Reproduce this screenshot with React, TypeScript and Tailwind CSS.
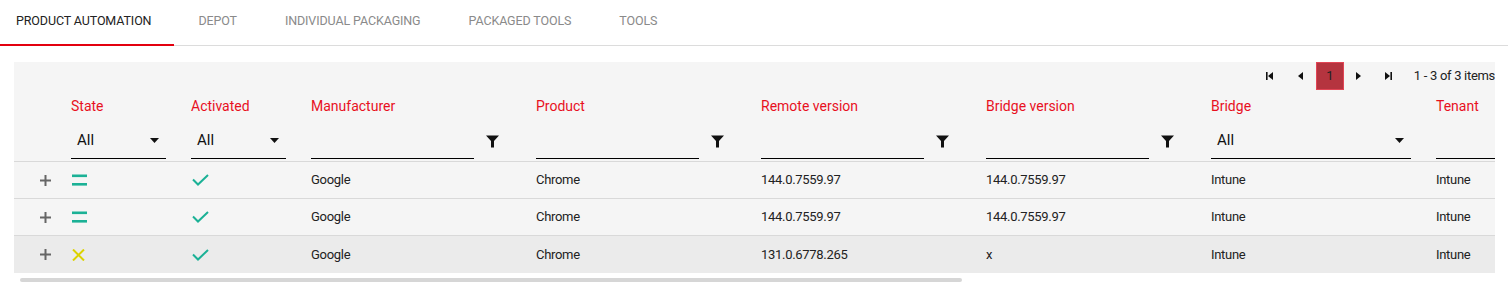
import { useState } from 'react'

const tabs = ['PRODUCT AUTOMATION', 'DEPOT', 'INDIVIDUAL PACKAGING', 'PACKAGED TOOLS', 'TOOLS']

type Col = { label: string; filter: 'select' | 'text' | 'blank' }

const columns: Col[] = [
  { label: 'State', filter: 'select' },
  { label: 'Activated', filter: 'select' },
  { label: 'Manufacturer', filter: 'text' },
  { label: 'Product', filter: 'text' },
  { label: 'Remote version', filter: 'text' },
  { label: 'Bridge version', filter: 'text' },
  { label: 'Bridge', filter: 'select' },
  { label: 'Tenant', filter: 'blank' },
]

const rows = [
  { state: 'same', remote: '144.0.7559.97', bridgeVersion: '144.0.7559.97' },
  { state: 'same', remote: '144.0.7559.97', bridgeVersion: '144.0.7559.97' },
  { state: 'diff', remote: '131.0.6778.265', bridgeVersion: 'x' },
]

const gridCols = 'grid grid-cols-[32px_120px_120px_225px_225px_225px_225px_225px_225px]'

function Funnel() {
  return (
    <svg width="13" height="13" viewBox="0 0 13 13">
      <path d="M0 0.5 H13 L8 6 V12.5 H5 V6 Z" fill="#111" />
    </svg>
  )
}

function Caret() {
  return (
    <svg width="9" height="5" viewBox="0 0 9 5">
      <path d="M0 0 H9 L4.5 5 Z" fill="#111" />
    </svg>
  )
}

function Plus() {
  return (
    <svg width="11" height="11" viewBox="0 0 11 11" className="shrink-0">
      <path d="M5.5 0 V11 M0 5.5 H11" stroke="#666" strokeWidth="2" />
    </svg>
  )
}

function Equals() {
  return (
    <svg width="15" height="12" viewBox="0 0 15 12" className="shrink-0">
      <rect x="0" y="0.5" width="15" height="2.6" fill="#1bb196" />
      <rect x="0" y="9" width="15" height="2.6" fill="#1bb196" />
    </svg>
  )
}

function Cross() {
  return (
    <svg width="13" height="12" viewBox="0 0 13 12" className="shrink-0">
      <path d="M1 0.5 L12 11.5 M12 0.5 L1 11.5" stroke="#dcd300" strokeWidth="2" />
    </svg>
  )
}

function Check() {
  return (
    <svg width="17" height="12" viewBox="0 0 17 12" className="shrink-0">
      <path d="M1 5.5 L6 10.5 L16 1" stroke="#1bb196" strokeWidth="2" fill="none" />
    </svg>
  )
}

function PagerIcon({ kind }: { kind: 'first' | 'prev' | 'next' | 'last' }) {
  const paths = {
    first: 'M0 0 H1.6 V8 H0 Z M7 0 V8 L2 4 Z',
    prev: 'M6 0 V8 L1 4 Z',
    next: 'M1 0 V8 L6 4 Z',
    last: 'M0 0 V8 L5 4 Z M5.4 0 H7 V8 H5.4 Z',
  }
  return (
    <svg width="7" height="8" viewBox="0 0 7 8">
      <path d={paths[kind]} fill="#111" />
    </svg>
  )
}

function HeaderCell({ col }: { col: Col }) {
  return (
    <div className="pl-[25px] pt-2 pb-[2px]">
      <div className="h-4 leading-4 text-[14px] text-[#e8101e] whitespace-nowrap">{col.label}</div>
      <div className="mt-[17px] h-7 flex items-center">
        {col.filter === 'select' && (
          <div className="flex-1 h-7 flex items-center justify-between pl-[6px] pr-[7px] pb-2 border-b border-black">
            <span className="text-[15px] text-[#111]">All</span>
            <Caret />
          </div>
        )}
        {col.filter === 'text' && (
          <>
            <div className="flex-1 h-7 border-b border-black" />
            <div className="w-[37px] h-7 pb-2 flex items-center justify-center">
              <Funnel />
            </div>
          </>
        )}
        {col.filter === 'blank' && <div className="flex-1 h-7 border-b border-black" />}
      </div>
    </div>
  )
}

export default function App() {
  const [active, setActive] = useState(0)

  return (
    <div className="w-[1508px] h-[294px] bg-white font-['Roboto',sans-serif] overflow-hidden">
      <div className="flex h-[46px] border-b border-[#dcdcdc]">
        {tabs.map((t, i) => (
          <button
            key={t}
            onClick={() => setActive(i)}
            className={
              'h-[46px] pb-[2px] text-[12.5px] tracking-[-0.12px] border-b-2 -mb-px ' +
              (i === 0 ? 'pl-4 pr-[23px] ' : 'px-6 ') +
              (active === i ? 'border-[#e3000f] text-[#222]' : 'border-transparent text-[#8a8a8a]')
            }
          >
            {t}
          </button>
        ))}
      </div>

      <div className="ml-[14px] mt-4 w-[1481px] overflow-hidden">
        <div className="bg-[#f5f5f5]">
          <div className="h-7 flex justify-end items-center text-[13px] text-[#222]">
            <div className="w-[31px] flex justify-center"><PagerIcon kind="first" /></div>
            <div className="w-[31px] flex justify-center"><PagerIcon kind="prev" /></div>
            <div className="w-7 h-7 flex items-center justify-center bg-[#b5343f] border border-[#e24555] text-[#222]">1</div>
            <div className="w-[30px] flex justify-center"><PagerIcon kind="next" /></div>
            <div className="w-[30px] flex justify-center"><PagerIcon kind="last" /></div>
            <span className="ml-[10px] whitespace-nowrap tracking-[-0.3px]">1 - 3 of 3 items</span>
          </div>

          <div className={gridCols + ' border-b border-[#d9d9d9]'}>
            <div />
            {columns.map((c) => (
              <HeaderCell key={c.label} col={c} />
            ))}
          </div>

          {rows.map((r, i) => (
            <div
              key={i}
              className={
                gridCols +
                ' h-[37px] items-center text-[13px] text-[#222] tracking-[-0.3px] ' +
                (i < rows.length - 1 ? 'border-b border-[#d9d9d9] ' : '') +
                (i === 2 ? 'bg-[#ebebeb]' : '')
              }
            >
              <div className="pl-[26px] flex"><Plus /></div>
              <div className="pl-[26px] flex">{r.state === 'same' ? <Equals /> : <Cross />}</div>
              <div className="pl-[26px] flex"><Check /></div>
              <div className="pl-[25px]">Google</div>
              <div className="pl-[25px]">Chrome</div>
              <div className="pl-[25px]">{r.remote}</div>
              <div className="pl-[25px]">{r.bridgeVersion}</div>
              <div className="pl-[25px]">Intune</div>
              <div className="pl-[25px]">Intune</div>
            </div>
          ))}
        </div>
        <div className="h-[22px] pt-[5px] pl-[6px]">
          <div className="w-[942px] h-1 rounded-full bg-[#d6d6d6]" />
        </div>
      </div>
    </div>
  )
}
